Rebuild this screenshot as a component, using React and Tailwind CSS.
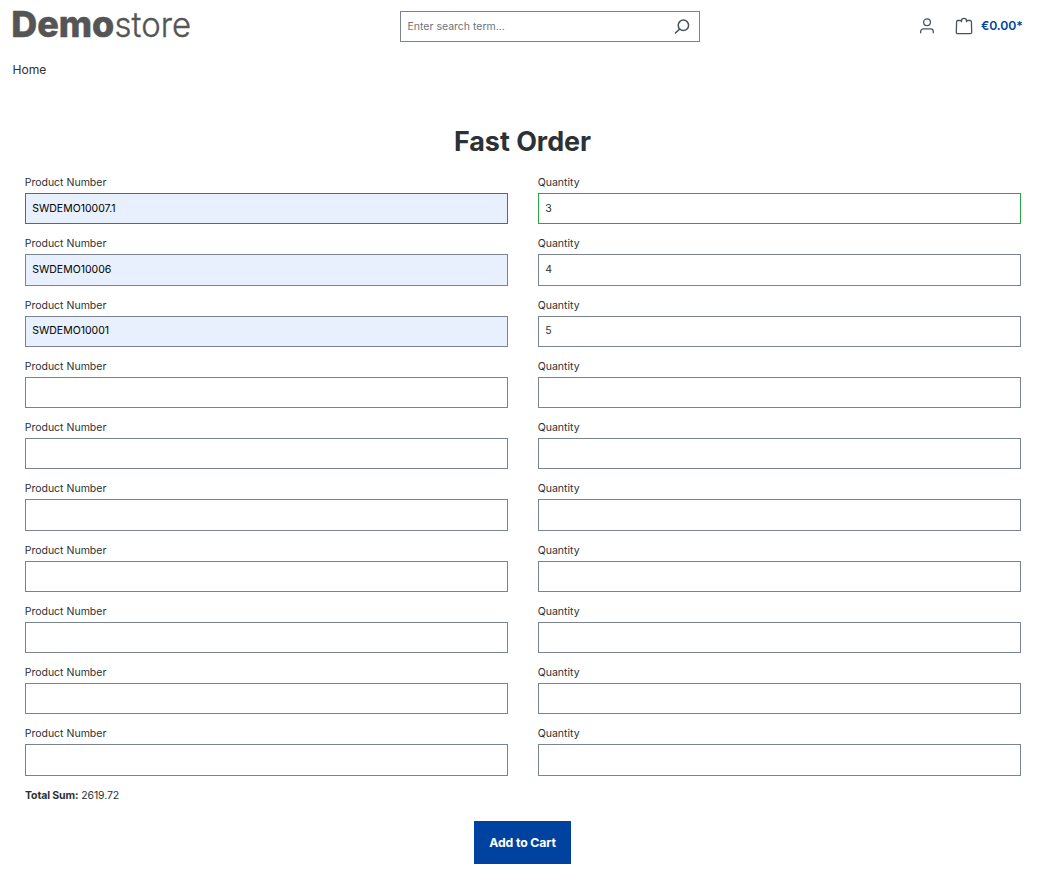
const rows = [
  { product: 'SWDEMO10007.1', quantity: '3', productClass: 'border-[#007bff] bg-[#e8f0fe]', quantityClass: 'border-[#28a745]' },
  { product: 'SWDEMO10006', quantity: '4', productClass: 'border-[#798490] bg-[#e8f0fe]' },
  { product: 'SWDEMO10001', quantity: '5', productClass: 'border-[#798490] bg-[#e8f0fe]' },
  {}, {}, {}, {}, {}, {}, {},
];

function Field({ label, value = '', boxClass = 'border-[#798490]', textClass = 'text-[#2b3136]' }) {
  return (
    <label className="block h-[61.25px]">
      <span className="-ml-[0.3px] block h-[18px] text-[10.5px] leading-[15px] text-[#2b3136]">{label}</span>
      <input
        defaultValue={value}
        className={`block h-[31.2px] w-full border px-[6.2px] pb-[1px] text-[10.5px] outline-none ${textClass} ${boxClass}`}
      />
    </label>
  );
}

function Logo() {
  return (
    <svg width="184" height="40" viewBox="0 0 184 40" fill="#555" className="block overflow-visible" aria-label="Demostore">
      <text x="-0.8" y="32.5" fontSize="35.8" fontWeight="800" stroke="#555" strokeWidth="0.5" textLength="103" lengthAdjust="spacingAndGlyphs">Demo</text>
      <text x="102.6" y="32.5" fontSize="35" fontWeight="300" stroke="#555" strokeWidth="0.35" textLength="76.4" lengthAdjust="spacingAndGlyphs">store</text>
    </svg>
  );
}

function Header() {
  return (
    <header className="flex h-[52px] items-start pl-3">
      <div className="w-[388px] pt-[4px]"><Logo /></div>
      <div className="mt-[11px] flex h-[31px] w-[300px] items-center justify-between border border-[#798490] pl-[6.5px] pr-[9px]">
        <input placeholder="Enter search term..." className="w-[200px] text-[10.5px] outline-none placeholder:text-[#6c757d]" />
        <svg width="16" height="16" viewBox="0 0 16 16" fill="none" stroke="#4a545b" strokeWidth="1.5" strokeLinecap="round">
          <circle cx="9.4" cy="6.3" r="5.2" />
          <path d="M5.6 10.1 1.4 14" />
        </svg>
      </div>
      <div className="ml-[219px] flex h-[52px] items-center">
        <svg width="16" height="18" viewBox="0 0 16 18" fill="none" stroke="#4a545b" strokeWidth="1.3" strokeLinecap="round">
          <circle cx="8" cy="5.3" r="3.4" />
          <path d="M1.7 15.8V14.5a2.7 2.7 0 0 1 2.7-2.7h7.2a2.7 2.7 0 0 1 2.7 2.7v1.3" />
        </svg>
        <svg width="18" height="18" viewBox="0 0 18 18" fill="none" stroke="#4a545b" strokeWidth="1.3" strokeLinejoin="round" className="ml-5">
          <path d="M2.8 3.5h2.9l.8 1.2V3.7a2.5 2.4 0 0 1 5 0v1l.8-1.2h2.9a1.2 1.2 0 0 1 1.2 1.2l.3 10.6a1.3 1.3 0 0 1-1.3 1.3H2.6a1.3 1.3 0 0 1-1.3-1.3l.3-10.6a1.2 1.2 0 0 1 1.2-1.2Z" />
        </svg>
        <span className="ml-2 text-[12.25px] font-semibold tracking-[-0.01em] text-[#0042a0]">€0.00*</span>
      </div>
    </header>
  );
}

export default function App() {
  return (
    <div className="h-[873px] overflow-hidden bg-white font-['Inter',sans-serif] text-[#2b3136]">
      <Header />
      <nav className="flex h-9 items-center pl-[12.5px] text-[12.1px]">Home</nav>
      <main className="pl-[25px] pr-[31px]">
        <h1 className="pt-[36px] pr-[1px] text-center text-[26.9px] leading-[35px] font-bold">Fast Order</h1>
        <form className="pt-[16.1px]">
          {rows.map((row, i) => (
            <div key={i} className="grid grid-cols-2 gap-[30px]">
              <Field label="Product Number" value={row.product} boxClass={row.productClass} textClass="text-black" />
              <Field label="Quantity" value={row.quantity} boxClass={row.quantityClass} />
            </div>
          ))}
          <p className="h-[15.5px] text-[10.5px] leading-[16px] tracking-[-0.01em]"><strong className="font-bold">Total Sum:</strong> 2619.72</p>
          <div className="flex justify-center pt-[17.5px] pr-[1px]">
            <button type="button" className="h-[43px] w-[97px] bg-[#0042a0] pt-[2px] text-[12.25px] font-bold tracking-[-0.01em] text-white">Add to Cart</button>
          </div>
        </form>
      </main>
    </div>
  );
}
